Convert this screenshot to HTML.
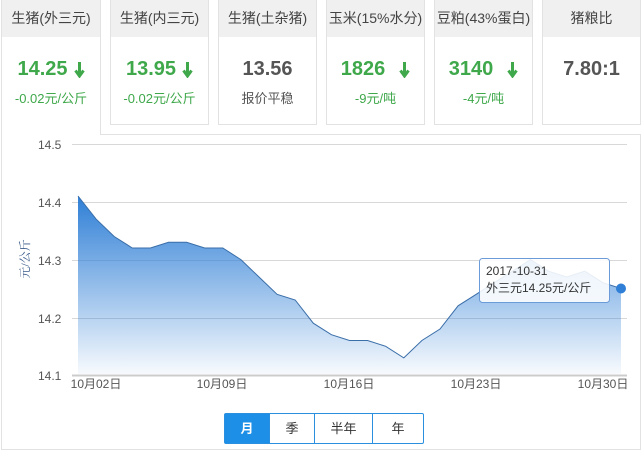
<!DOCTYPE html>
<html><head><meta charset="utf-8"><style>
body{margin:0;width:643px;height:452px;background:#fff;font-family:"Liberation Sans","Noto Sans CJK SC",sans-serif;position:relative;overflow:hidden}
.card{position:absolute;top:0;height:125px;border:1px solid #e2e2e2;border-top:none;box-sizing:border-box;background:#fff;text-align:center}
.hd{height:37px;background:#f0f0f0;line-height:37px;font-size:14px;color:#444}
.v{font-size:20px;font-weight:bold;margin-top:20px;height:24px;line-height:24px}
.g{color:#3ea84a}.d{color:#555}
.s{font-size:13px;margin-top:7px}
.sel{height:135px;border-bottom:none;z-index:2}
.arr{display:inline-block;vertical-align:middle;margin-left:6px}
.panel{position:absolute;left:1px;top:134px;width:640px;height:316px;border:1px solid #e2e2e2;box-sizing:border-box}
.btns{position:absolute;top:413px;left:224px;height:29px;border:1px solid #2b8fe0;display:flex;font-size:13px;border-radius:2px}
.btns div{line-height:29px;text-align:center;color:#333;border-left:1px solid #2b8fe0}
.btns div:first-child{border-left:none;background:#1e8fe6;color:#fff;font-weight:bold}
</style></head><body>
<div class="panel"></div>
<div class="card sel" style="left:1px;width:100px;"><div class="hd">生猪(外三元)</div><div class="v g">14.25<svg class="arr" width="11" height="17" viewBox="0 0 11 17"><path d="M5.5 1V14M1.5 9.5L5.5 15L9.5 9.5" stroke="#3ea84a" stroke-width="3" fill="none"/></svg></div><div class="s g">-0.02元/公斤</div></div>
<div class="card" style="left:110px;width:99px;"><div class="hd">生猪(内三元)</div><div class="v g">13.95<svg class="arr" width="11" height="17" viewBox="0 0 11 17"><path d="M5.5 1V14M1.5 9.5L5.5 15L9.5 9.5" stroke="#3ea84a" stroke-width="3" fill="none"/></svg></div><div class="s g">-0.02元/公斤</div></div>
<div class="card" style="left:218px;width:99px;"><div class="hd">生猪(土杂猪)</div><div class="v d">13.56</div><div class="s d">报价平稳</div></div>
<div class="card" style="left:326px;width:99px;"><div class="hd">玉米(15%水分)</div><div class="v g">1826<svg class="arr" style="margin-left:14px" width="11" height="17" viewBox="0 0 11 17"><path d="M5.5 1V14M1.5 9.5L5.5 15L9.5 9.5" stroke="#3ea84a" stroke-width="3" fill="none"/></svg></div><div class="s g">-9元/吨</div></div>
<div class="card" style="left:434px;width:99px;"><div class="hd">豆粕(43%蛋白)</div><div class="v g">3140<svg class="arr" style="margin-left:14px" width="11" height="17" viewBox="0 0 11 17"><path d="M5.5 1V14M1.5 9.5L5.5 15L9.5 9.5" stroke="#3ea84a" stroke-width="3" fill="none"/></svg></div><div class="s g">-4元/吨</div></div>
<div class="card" style="left:542px;width:99px;"><div class="hd">猪粮比</div><div class="v d">7.80:1</div></div>
<svg style="position:absolute;left:0;top:0" width="643" height="452">
<defs><linearGradient id="gr" x1="0" y1="0" x2="0" y2="1"><stop offset="0" stop-color="#2f7fd6"/><stop offset="1" stop-color="#2f7fd6" stop-opacity="0.04"/></linearGradient></defs>
<g stroke="#d8d8d8" stroke-width="1">
<line x1="72" y1="144.5" x2="627" y2="144.5"/><line x1="72" y1="202.5" x2="627" y2="202.5"/><line x1="72" y1="260.5" x2="627" y2="260.5"/><line x1="72" y1="318.5" x2="627" y2="318.5"/></g>
<line x1="72" y1="375.5" x2="627" y2="375.5" stroke="#ccc" stroke-width="2"/>
<path d="M78 196L96.1 219.1L114.2 236.5L132.3 248L150.4 248L168.5 242.3L186.6 242.3L204.7 248L222.8 248L240.9 259.6L259 277L277.1 294.3L295.2 300L313.3 323.2L331.4 334.7L349.5 340.5L367.6 340.5L385.7 346.3L403.8 357.9L421.9 340.5L440 329L458.1 305.8L476.2 294.3L494.3 282.7L512.4 271.2L530.5 259.6L548.6 271.2L566.7 277L584.8 271.2L602.9 282.7L621 288.5L621 374L78 374Z" fill="url(#gr)"/>
<path d="M78 196L96.1 219.1L114.2 236.5L132.3 248L150.4 248L168.5 242.3L186.6 242.3L204.7 248L222.8 248L240.9 259.6L259 277L277.1 294.3L295.2 300L313.3 323.2L331.4 334.7L349.5 340.5L367.6 340.5L385.7 346.3L403.8 357.9L421.9 340.5L440 329L458.1 305.8L476.2 294.3L494.3 282.7L512.4 271.2L530.5 259.6L548.6 271.2L566.7 277L584.8 271.2L602.9 282.7L621 288.5" fill="none" stroke="#3a6ea8" stroke-width="1"/>
<circle cx="621" cy="288.5" r="5" fill="#2f7fd6"/>
<g font-size="12" fill="#555" font-family="Liberation Sans,sans-serif">
<text x="38" y="149">14.5</text><text x="38" y="207">14.4</text><text x="38" y="265">14.3</text><text x="38" y="323">14.2</text><text x="38" y="380">14.1</text></g>
<text transform="translate(29,259) rotate(-90)" text-anchor="middle" font-size="12" fill="#3a5a8a" font-family="Liberation Serif,Noto Serif CJK SC,serif">元/公斤</text>
<g font-size="12" fill="#555" text-anchor="middle" font-family="Liberation Sans,Noto Sans CJK SC,sans-serif">
<text x="96" y="388">10月02日</text><text x="222" y="388">10月09日</text><text x="349" y="388">10月16日</text><text x="476" y="388">10月23日</text><text x="603" y="388">10月30日</text></g>
<rect x="479.5" y="258.5" width="130" height="44" rx="3" fill="#fff" fill-opacity="0.88" stroke="#6b9bd8"/>
<g font-size="12" fill="#333" font-family="Liberation Sans,Noto Sans CJK SC,sans-serif"><text x="486" y="275">2017-10-31</text><text x="486" y="292">外三元14.25元/公斤</text></g>
</svg>
<div class="btns"><div style="width:44px">月</div><div style="width:44px">季</div><div style="width:57px">半年</div><div style="width:50px">年</div></div>
</body></html>
